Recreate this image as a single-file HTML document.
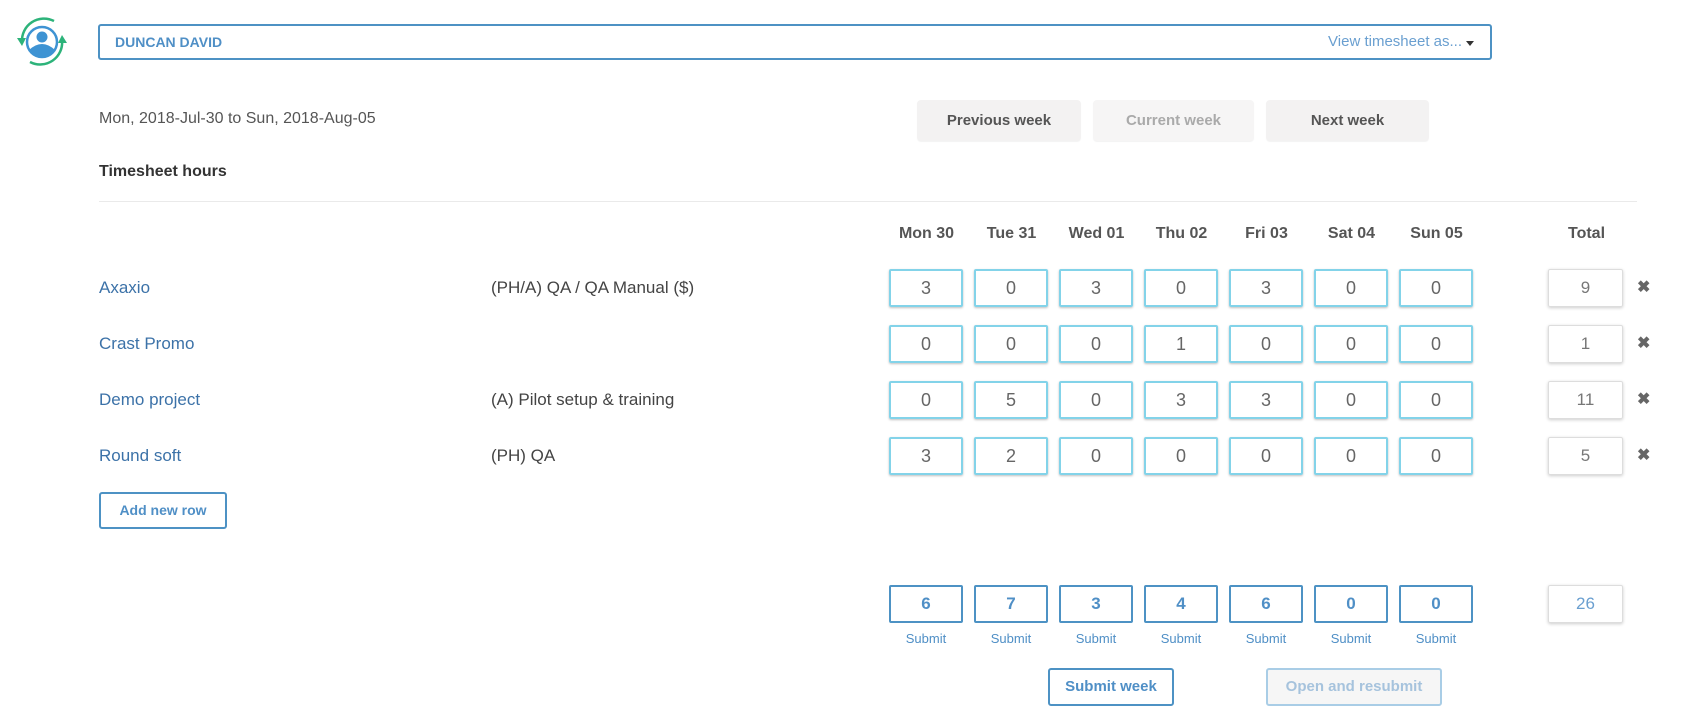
<!DOCTYPE html>
<html><head><meta charset="utf-8"><style>
*{box-sizing:border-box;margin:0;padding:0}
body{width:1694px;height:725px;background:#fff;font-family:"Liberation Sans",sans-serif;position:relative;overflow:hidden;color:#555}
.a{position:absolute}
.dd{left:98px;top:24px;width:1394px;height:36px;border:2px solid #4d92c4;border-radius:3px}
.dd .n{position:absolute;left:15px;top:8px;font-size:14px;font-weight:bold;color:#4f8fc6}
.dd .v{position:absolute;right:28px;top:7px;font-size:15px;color:#6a9fd0}
.dd .c{position:absolute;right:16px;top:15px;border-left:4px solid transparent;border-right:4px solid transparent;border-top:5px solid #333}
.btn{height:41px;top:100px;background:#f3f2f2;border-radius:4px;font-size:15px;font-weight:bold;color:#555;text-align:center;line-height:41px;box-shadow:0 1px 1px rgba(0,0,0,.05)}
.box{width:74px;height:38px;border:2px solid #83d3e9;border-radius:2px;box-shadow:0 1px 2px rgba(0,0,0,.25);text-align:center;font-size:18px;line-height:34px;color:#666}
.tot{width:75px;height:38px;border:1px solid #ddd;border-radius:2px;box-shadow:0 1px 3px rgba(0,0,0,.2);text-align:center;font-size:17px;line-height:36px;color:#777}
.hd{top:225px;font-size:16px;font-weight:bold;color:#555;width:85px;text-align:center}
.nm{left:99px;font-size:17px;color:#3c72a8}
.tk{left:491px;font-size:17px;color:#444}
.x{left:1637px;font-size:16px;font-weight:bold;color:#666}
.sb{width:74px;height:38px;border:2px solid #4d92c4;border-radius:2px;text-align:center;font-size:17px;font-weight:bold;line-height:34px;color:#4f8fc6}
.sl{top:631px;width:74px;text-align:center;font-size:13px;color:#4f8fc6}
</style></head><body>
<svg class="a" style="left:14px;top:16px" width="56" height="50" viewBox="0 0 56 50">
<path d="M40 5 A22 22 0 0 0 8 26" fill="none" stroke="#2db37a" stroke-width="2.5"/>
<path d="M3 22 L8 30 L12 22 Z" fill="#2db37a"/>
<path d="M16 46 A22 22 0 0 0 48 24" fill="none" stroke="#2db37a" stroke-width="2.5"/>
<path d="M44 27 L48 19 L53 27 Z" fill="#2db37a"/>
<circle cx="28" cy="26" r="15" fill="#fff" stroke="#3e93d3" stroke-width="2.5"/>
<circle cx="28" cy="21" r="5.5" fill="#3e93d3"/>
<path d="M15 34 Q28 22 41 34 A15 15 0 0 1 15 34 Z" fill="#3e93d3"/>
</svg>
<div class="a dd"><span class="n">DUNCAN DAVID</span><span class="v">View timesheet as...</span><span class="c"></span></div>
<div class="a" style="left:99px;top:110px;font-size:16px;color:#555">Mon, 2018-Jul-30 to Sun, 2018-Aug-05</div>
<div class="a" style="left:99px;top:163px;font-size:16px;font-weight:bold;color:#333">Timesheet hours</div>
<div class="a btn" style="left:917px;width:164px">Previous week</div>
<div class="a btn" style="left:1093px;width:161px;color:#aaa;background:#f6f5f5">Current week</div>
<div class="a btn" style="left:1266px;width:163px">Next week</div>
<div class="a" style="left:99px;top:201px;width:1538px;height:1px;background:#eaeaea"></div>
<div class="a hd" style="left:884px">Mon 30</div>
<div class="a hd" style="left:969px">Tue 31</div>
<div class="a hd" style="left:1054px">Wed 01</div>
<div class="a hd" style="left:1139px">Thu 02</div>
<div class="a hd" style="left:1224px">Fri 03</div>
<div class="a hd" style="left:1309px">Sat 04</div>
<div class="a hd" style="left:1394px">Sun 05</div>
<div class="a hd" style="left:1544px">Total</div>

<div class="a nm" style="top:278px">Axaxio</div><div class="a tk" style="top:278px">(PH/A) QA / QA Manual ($)</div>
<div class="a nm" style="top:334px">Crast Promo</div>
<div class="a nm" style="top:390px">Demo project</div><div class="a tk" style="top:390px">(A) Pilot setup &amp; training</div>
<div class="a nm" style="top:446px">Round soft</div><div class="a tk" style="top:446px">(PH) QA</div>

<div class="a box" style="left:889px;top:269px">3</div><div class="a box" style="left:974px;top:269px">0</div><div class="a box" style="left:1059px;top:269px">3</div><div class="a box" style="left:1144px;top:269px">0</div><div class="a box" style="left:1229px;top:269px">3</div><div class="a box" style="left:1314px;top:269px">0</div><div class="a box" style="left:1399px;top:269px">0</div>
<div class="a box" style="left:889px;top:325px">0</div><div class="a box" style="left:974px;top:325px">0</div><div class="a box" style="left:1059px;top:325px">0</div><div class="a box" style="left:1144px;top:325px">1</div><div class="a box" style="left:1229px;top:325px">0</div><div class="a box" style="left:1314px;top:325px">0</div><div class="a box" style="left:1399px;top:325px">0</div>
<div class="a box" style="left:889px;top:381px">0</div><div class="a box" style="left:974px;top:381px">5</div><div class="a box" style="left:1059px;top:381px">0</div><div class="a box" style="left:1144px;top:381px">3</div><div class="a box" style="left:1229px;top:381px">3</div><div class="a box" style="left:1314px;top:381px">0</div><div class="a box" style="left:1399px;top:381px">0</div>
<div class="a box" style="left:889px;top:437px">3</div><div class="a box" style="left:974px;top:437px">2</div><div class="a box" style="left:1059px;top:437px">0</div><div class="a box" style="left:1144px;top:437px">0</div><div class="a box" style="left:1229px;top:437px">0</div><div class="a box" style="left:1314px;top:437px">0</div><div class="a box" style="left:1399px;top:437px">0</div>
<div class="a tot" style="left:1548px;top:269px">9</div><div class="a x" style="top:277px">✖</div>
<div class="a tot" style="left:1548px;top:325px">1</div><div class="a x" style="top:333px">✖</div>
<div class="a tot" style="left:1548px;top:381px">11</div><div class="a x" style="top:389px">✖</div>
<div class="a tot" style="left:1548px;top:437px">5</div><div class="a x" style="top:445px">✖</div>

<div class="a" style="left:99px;top:492px;width:128px;height:37px;border:2px solid #4d92c4;border-radius:3px;text-align:center;line-height:33px;font-size:14px;font-weight:bold;color:#4f8fc6">Add new row</div>

<div class="a sb" style="left:889px;top:585px">6</div><div class="a sb" style="left:974px;top:585px">7</div><div class="a sb" style="left:1059px;top:585px">3</div><div class="a sb" style="left:1144px;top:585px">4</div><div class="a sb" style="left:1229px;top:585px">6</div><div class="a sb" style="left:1314px;top:585px">0</div><div class="a sb" style="left:1399px;top:585px">0</div>
<div class="a sl" style="left:889px">Submit</div><div class="a sl" style="left:974px">Submit</div><div class="a sl" style="left:1059px">Submit</div><div class="a sl" style="left:1144px">Submit</div><div class="a sl" style="left:1229px">Submit</div><div class="a sl" style="left:1314px">Submit</div><div class="a sl" style="left:1399px">Submit</div>
<div class="a tot" style="left:1548px;top:585px;color:#6a9fd0">26</div>
<div class="a" style="left:1048px;top:668px;width:126px;height:38px;border:2px solid #4d92c4;border-radius:3px;text-align:center;line-height:34px;font-size:15px;font-weight:bold;color:#4f8fc6">Submit week</div>
<div class="a" style="left:1266px;top:668px;width:176px;height:38px;border:2px solid #a9cde6;background:#f6f6f6;border-radius:3px;text-align:center;line-height:34px;font-size:15px;font-weight:bold;color:#a6c3dd">Open and resubmit</div>
</body></html>
